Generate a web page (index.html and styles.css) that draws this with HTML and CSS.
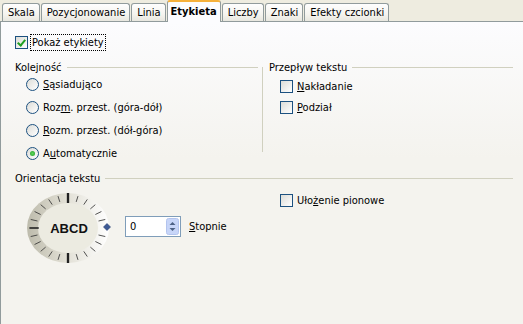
FILE: index.html
```html
<!DOCTYPE html>
<html lang="pl">
<head>
    <meta charset="UTF-8">
    <title>Etykieta</title>
    <link rel="stylesheet" href="styles.css">
</head>
<body>
<div class="dialog">
    <div class="tabs">
        <div class="tab">Skala</div>
        <div class="tab">Pozycjonowanie</div>
        <div class="tab">Linia</div>
        <div class="tab active">Etykieta</div>
        <div class="tab">Liczby</div>
        <div class="tab">Znaki</div>
        <div class="tab">Efekty czcionki</div>
    </div>
    <div class="page">
        <div class="row first">
            <span class="box checked"></span>
            <span class="focus">Pokaż etykiety</span>
        </div>

        <div class="cols">
            <div class="group">
                <div class="head"><span>Kolejność</span></div>
                <div class="list">
                    <div class="row"><span class="radio"></span><span><u>S</u>ąsiadująco</span></div>
                    <div class="row"><span class="radio"></span><span>Roz<u>m</u>. przest. (góra-dół)</span></div>
                    <div class="row"><span class="radio"></span><span><u>R</u>ozm. przest. (dół-góra)</span></div>
                    <div class="row"><span class="radio on"></span><span>A<u>u</u>tomatycznie</span></div>
                </div>
            </div>
            <div class="sep"></div>
            <div class="group">
                <div class="head"><span>Przepływ tekstu</span></div>
                <div class="list right">
                    <div class="row"><span class="box"></span><span><u>N</u>akładanie</span></div>
                    <div class="row"><span class="box"></span><span><u>P</u>odział</span></div>
                </div>
            </div>
        </div>

        <div class="head wide"><span>Orientacja tekstu</span></div>
        <div class="cols orient">
            <div class="dial-row">
                <svg class="dial" width="86" height="76" viewBox="0 0 86 76">
                    <defs>
                        <linearGradient id="rim" x1="0" y1="0" x2="1" y2="0">
                            <stop offset="0" stop-color="#bdbbac"/>
                            <stop offset="0.45" stop-color="#e0ded3"/>
                            <stop offset="1" stop-color="#ffffff"/>
                        </linearGradient>
                    </defs>
                    <ellipse cx="42" cy="38" rx="41" ry="35" fill="url(#rim)"/>
                    <ellipse cx="42" cy="38" rx="30" ry="25" fill="#ecebe1"/>
                    <g transform="translate(42 38) scale(1.17 1)" stroke="#222" vector-effect="non-scaling-stroke">
                        <line x1="0" y1="-25" x2="0" y2="-35" stroke-width="2"/>
                        <line x1="0" y1="25" x2="0" y2="35" stroke-width="2"/>
                        <line x1="-25" y1="0" x2="-33" y2="0" stroke-width="1.6"/>
                        <g stroke-width="0.7" stroke="#333">
                            <line x1="0" y1="-27" x2="0" y2="-33" transform="rotate(15)"/>
                            <line x1="0" y1="-27" x2="0" y2="-33" transform="rotate(30)"/>
                            <line x1="0" y1="-27" x2="0" y2="-33" transform="rotate(45)"/>
                            <line x1="0" y1="-27" x2="0" y2="-33" transform="rotate(60)"/>
                            <line x1="0" y1="-27" x2="0" y2="-33" transform="rotate(75)"/>
                            <line x1="0" y1="-27" x2="0" y2="-33" transform="rotate(105)"/>
                            <line x1="0" y1="-27" x2="0" y2="-33" transform="rotate(120)"/>
                            <line x1="0" y1="-27" x2="0" y2="-33" transform="rotate(135)"/>
                            <line x1="0" y1="-27" x2="0" y2="-33" transform="rotate(150)"/>
                            <line x1="0" y1="-27" x2="0" y2="-33" transform="rotate(165)"/>
                            <line x1="0" y1="-27" x2="0" y2="-33" transform="rotate(195)"/>
                            <line x1="0" y1="-27" x2="0" y2="-33" transform="rotate(210)"/>
                            <line x1="0" y1="-27" x2="0" y2="-33" transform="rotate(225)"/>
                            <line x1="0" y1="-27" x2="0" y2="-33" transform="rotate(240)"/>
                            <line x1="0" y1="-27" x2="0" y2="-33" transform="rotate(255)"/>
                            <line x1="0" y1="-27" x2="0" y2="-33" transform="rotate(285)"/>
                            <line x1="0" y1="-27" x2="0" y2="-33" transform="rotate(300)"/>
                            <line x1="0" y1="-27" x2="0" y2="-33" transform="rotate(315)"/>
                            <line x1="0" y1="-27" x2="0" y2="-33" transform="rotate(330)"/>
                            <line x1="0" y1="-27" x2="0" y2="-33" transform="rotate(345)"/>
                        </g>
                    </g>
                    <text x="43" y="43" text-anchor="middle" class="abcd">ABCD</text>
                    <path d="M77.5 37 L81 33.5 L84.5 37 L81 40.5 Z" fill="#3d5a95" stroke="#22386a" stroke-width="0.6"/>
                </svg>
                <div class="spin">
                    <span class="val">0</span>
                    <span class="spin-btn">
                        <svg width="13" height="17" viewBox="0 0 13 17">
                            <rect x="0.5" y="0.5" width="12" height="16" rx="2" fill="#c7d5f8" stroke="#b3c4ee"/>
                            <path d="M3.5 7 L6.5 4 L9.5 7 Z" fill="#4d6185"/>
                            <path d="M3.5 10 L6.5 13 L9.5 10 Z" fill="#4d6185"/>
                        </svg>
                    </span>
                </div>
                <span class="stop"><u>S</u>topnie</span>
            </div>
            <div></div>
            <div class="list right vert">
                <div class="row"><span class="box"></span><span>Uło<u>ż</u>enie pionowe</span></div>
            </div>
        </div>
    </div>
</div>
</body>
</html>
```

FILE: styles.css
```css
body {
    margin: 0;
    background-color: #eeece0;
    font-family: "DejaVu Sans Condensed", "DejaVu Sans", sans-serif;
    font-size: 11px;
    color: #000;
}

.dialog {
    width: 523px;
    height: 324px;
    display: flex;
    flex-direction: column;
    overflow: hidden;
}

.tabs {
    height: 21px;
    display: flex;
    align-items: flex-end;
    padding-left: 2px;
    position: relative;
    z-index: 1;
}

.tab {
    height: 17px;
    line-height: 17px;
    padding: 0 4px 0 5px;
    margin-right: 1px;
    border: 1px solid #919b9c;
    border-bottom: none;
    border-radius: 3px 3px 0 0;
    background: linear-gradient(#fefefe, #f5f4ef 60%, #e8e7df);
}

.tab.active {
    height: 20px;
    line-height: 20px;
    margin-bottom: -1px;
    border-top: 2px solid #f6b13b;
    background: #fcfcfe;
    font-weight: bold;
    padding: 0 3px;
}

.page {
    flex: 1;
    border-left: 1px solid #919b9c;
    border-top: 1px solid #919b9c;
    background: linear-gradient(#fcfcfe, #f4f3ee 45%, #f4f3ee);
    padding: 0 10px 0 13px;
}

.row {
    height: 16px;
    display: flex;
    align-items: center;
}

.row.first {
    margin-top: 12px;
    padding-left: 1px;
}

.box {
    width: 11px;
    height: 11px;
    border: 1px solid #1c5180;
    background: linear-gradient(135deg, #dcdcd7, #fff);
    margin-right: 4px;
    flex: none;
    position: relative;
}

.box.checked::after {
    content: "";
    position: absolute;
    left: 3px;
    top: 1px;
    width: 3px;
    height: 6px;
    border: solid #21a121;
    border-width: 0 2px 2px 0;
    transform: rotate(40deg);
}

.focus {
    outline: 1px dotted #000;
    padding: 1px 1px;
    margin-left: -1px;
}

.radio {
    width: 11px;
    height: 11px;
    border: 1px solid #1c5180;
    border-radius: 50%;
    background: linear-gradient(135deg, #dcdcd7, #fff);
    margin-right: 4px;
    flex: none;
    position: relative;
}

.radio.on::after {
    content: "";
    position: absolute;
    left: 3px;
    top: 3px;
    width: 5px;
    height: 5px;
    border-radius: 50%;
    background: radial-gradient(#5fd45f, #21a121);
}

.cols {
    display: grid;
    grid-template-columns: 244px 1px 1fr;
    column-gap: 4px;
}

.cols .sep {
    background: #d0d0bf;
    margin: 17px 0 0 0;
    height: 85px;
}

.group {
    display: flex;
    flex-direction: column;
}

.head {
    margin-top: 11px;
    height: 13px;
    display: flex;
    align-items: center;
    padding-left: 1px;
}

.head::after {
    content: "";
    flex: 1;
    height: 1px;
    background: #d0d0bf;
    margin-left: 5px;
}

.cols .group:last-child .head {
    margin-left: 1px;
}

.head.wide {
    margin-top: 11px;
}

.list {
    display: flex;
    flex-direction: column;
    gap: 7px;
    padding: 2px 0 0 12px;
}

.list.right {
    padding: 4px 0 0 13px;
    gap: 5px;
}

.orient .vert {
    padding-top: 7px;
}

.dial-row {
    display: flex;
    align-items: center;
    margin-top: 5px;
    padding-left: 12px;
}

.dial {
    flex: none;
}

.abcd {
    font-family: "Liberation Sans", Arial, sans-serif;
    font-weight: bold;
    font-size: 13px;
    fill: #111;
}

.spin {
    width: 54px;
    height: 19px;
    border: 1px solid #7f9db9;
    background: #fff;
    margin-left: 13px;
    display: flex;
    align-items: center;
    justify-content: space-between;
    margin-top: -3px;
}

.spin .val {
    padding-left: 4px;
}

.spin-btn {
    display: flex;
    margin-right: 1px;
}

.stop {
    margin-left: 8px;
    margin-top: -3px;
}
```
